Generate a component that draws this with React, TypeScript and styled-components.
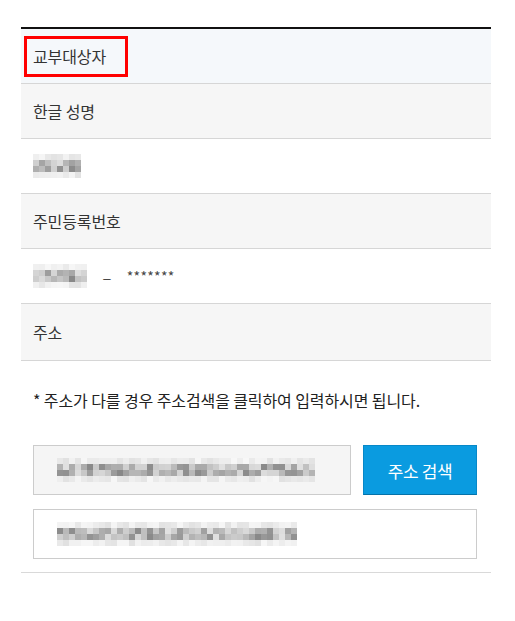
import React from 'react'
import styled, { createGlobalStyle } from 'styled-components'

const GlobalStyle = createGlobalStyle`
  html, body {
    margin: 0;
    padding: 0;
    background: #ffffff;
  }
  body {
    font-family: 'Noto Sans CJK KR', 'Noto Sans', sans-serif;
    color: #333333;
  }
`

// pixelated stand-in for blurred personal data
const Mosaic = ({ cols, rows, seed }: { cols: number; rows: number; seed: number }) => {
  let s = seed
  const rand = () => {
    s = (s * 9301 + 49297) % 233280
    return s / 233280
  }
  const cells = []
  for (let r = 0; r < rows; r++) {
    const edge = r === 0 || r === rows - 1
    for (let c = 0; c < cols; c++) {
      const v = rand()
      const level = edge ? 225 + Math.round(v * 22) : 135 + Math.round(v * 90)
      cells.push(<MosaicCell key={`${r}-${c}`} style={{ background: `rgb(${level},${level},${level})` }} />)
    }
  }
  return <MosaicGrid $cols={cols}>{cells}</MosaicGrid>
}

const App = () => {
  return (
    <>
      <GlobalStyle />
      <Page>
        <Table>
          <Row $tone="head">
            <HeadLabel>교부대상자</HeadLabel>
          </Row>
          <Row $tone="gray">한글 성명</Row>
          <Row $tone="white">
            <Mosaic cols={8} rows={4} seed={11} />
          </Row>
          <Row $tone="gray">주민등록번호</Row>
          <Row $tone="white">
            <IdLine>
              <Mosaic cols={9} rows={4} seed={37} />
              <Dash>_</Dash>
              <Stars>*******</Stars>
            </IdLine>
          </Row>
          <Row $tone="gray" $tall>주소</Row>
          <AddressSection>
            <Note>* 주소가 다를 경우 주소검색을 클릭하여 입력하시면 됩니다.</Note>
            <SearchLine>
              <AddressBox $filled>
                <Mosaic cols={43} rows={4} seed={53} />
              </AddressBox>
              <SearchButton>주소 검색</SearchButton>
            </SearchLine>
            <AddressBox>
              <Mosaic cols={40} rows={4} seed={91} />
            </AddressBox>
          </AddressSection>
        </Table>
      </Page>
    </>
  )
}

const Page = styled.main`
  padding: 27px 24px 40px 21px;
`

const Table = styled.section`
  border-top: 2px solid #111111;
  border-bottom: 1px solid #d9d9d9;
`

const Row = styled.div<{ $tone: 'head' | 'gray' | 'white'; $tall?: boolean }>`
  display: flex;
  align-items: center;
  height: ${(p) => (p.$tall ? '56px' : '54px')};
  padding: 0 12px;
  border-bottom: 1px solid #d6d6d6;
  font-size: 16px;
  letter-spacing: -0.1px;
  color: #333333;
  background: ${(p) => (p.$tone === 'head' ? '#f5f8fb' : p.$tone === 'gray' ? '#f6f6f6' : '#ffffff')};
`

const HeadLabel = styled.span`
  display: inline-flex;
  align-items: center;
  height: 41px;
  margin-left: -9px;
  padding: 0 19px 0 6px;
  border: 3px solid #ff0000;
  box-sizing: border-box;
`

const MosaicGrid = styled.div<{ $cols: number }>`
  display: grid;
  grid-template-columns: repeat(${(p) => p.$cols}, 6px);
  grid-auto-rows: 6px;
  flex-shrink: 0;
`

const MosaicCell = styled.span`
  display: block;
  width: 6px;
  height: 6px;
`

const IdLine = styled.div`
  display: flex;
  align-items: center;
`

const Dash = styled.span`
  margin: 0 16px 0 16px;
  font-size: 14px;
  color: #333333;
  position: relative;
  top: -4px;
`

const Stars = styled.span`
  font-size: 14px;
  letter-spacing: 0.3px;
  color: #444444;
`

const AddressSection = styled.div`
  padding: 27px 14px 13px 12px;
  display: flex;
  flex-direction: column;
  gap: 14px;
`

const Note = styled.p`
  margin: 0 0 19px;
  font-size: 16px;
  letter-spacing: -0.1px;
  color: #222222;
`

const SearchLine = styled.div`
  display: flex;
  gap: 12px;
`

const AddressBox = styled.div<{ $filled?: boolean }>`
  flex: 1 0 auto;
  height: 50px;
  box-sizing: border-box;
  display: flex;
  align-items: center;
  padding-left: 23px;
  border: 1px solid #cccccc;
  background: ${(p) => (p.$filled ? '#f5f5f5' : '#ffffff')};
`

const SearchButton = styled.button`
  width: 114px;
  height: 50px;
  flex-shrink: 0;
  border: 1px solid #0788c8;
  border-bottom-color: #0672a8;
  background: #0a9be0;
  color: #ffffff;
  font-family: 'Noto Sans CJK KR', 'Noto Sans', sans-serif;
  font-size: 17px;
  letter-spacing: -0.4px;
  cursor: pointer;
`

export default App
